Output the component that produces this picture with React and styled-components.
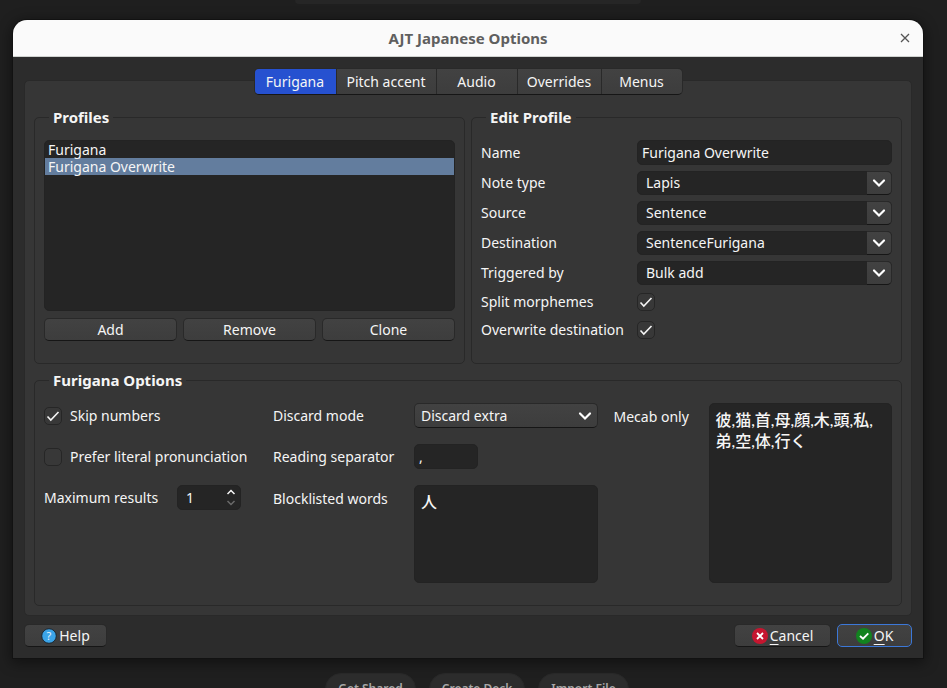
import React, { useState } from "react";
import styled, { createGlobalStyle, css } from "styled-components";

const GlobalStyle = createGlobalStyle`
  *, *::before, *::after { box-sizing: border-box; }
  body {
    margin: 0;
    background: #1f1f1f;
    color: #f5f5f5;
    font: 14px/18px "Noto Sans", "Noto Sans CJK JP", sans-serif;
  }
  button, input, select, textarea { font: inherit; color: inherit; margin: 0; }
`;

const raised = css`
  background: linear-gradient(#424242, #3d3d3d);
  border: 1px solid #292929;
  border-bottom-color: #161616;
  border-radius: 5px;
`;

const sunken = css`
  background: #252525;
  border: 1px solid #232323;
  border-radius: 5px;
`;

const Screen = styled.div`
  display: flex;
  flex-direction: column;
  height: 100vh;
  padding: 0 24px 0 13px;
  overflow: hidden;
`;

const DeckPanel = styled.div`
  flex: none;
  align-self: center;
  width: 38%;
  height: 4px;
  background: #262626;
  border-radius: 0 0 10px 10px;
`;

const DeckActions = styled.div`
  display: flex;
  flex: none;
  justify-content: center;
  gap: 13px;
  margin-top: 15px;
  padding-left: 18px;
`;

const DeckButton = styled.button`
  height: 32px;
  padding: 0 12px;
  background: #2c2c2c;
  border: 1px solid #282828;
  border-radius: 16px;
  color: #a8a8a8;
  font-size: 12px;
  font-weight: 600;
`;

const Dialog = styled.section`
  flex: none;
  margin-top: 16px;
  background: #2c2c2c;
  border-radius: 14px 14px 0 0;
  box-shadow: 0 0 0 1px #121212, 0 3px 14px 2px rgba(0, 0, 0, 0.45);
`;

const TitleBar = styled.header`
  display: grid;
  grid-template-columns: 36px 1fr 36px;
  align-items: center;
  height: 37px;
  background: #fafafa;
  border-bottom: 1px solid #cfd2cf;
  border-radius: 14px 14px 0 0;
`;

const Title = styled.h1`
  grid-column: 2;
  margin: 0;
  color: #5f5f5f;
  font-size: 15px;
  font-weight: 700;
  text-align: center;
`;

const CloseButton = styled.button`
  display: grid;
  place-items: center;
  height: 36px;
  padding: 0;
  background: none;
  border: 0;
  color: #555;
`;

const DialogBody = styled.div`
  padding: 11px;
`;

const TabBar = styled.div`
  position: relative;
  display: flex;
  width: max-content;
  margin: 0 auto;
  overflow: hidden;
  ${raised}
`;

const Tab = styled.button`
  min-width: ${(p) => p.$width}px;
  height: 25px;
  padding: 0;
  background: ${(p) => (p.$active ? "#2651d0" : "transparent")};
  border: 0;
  border-left: ${(p) => (p.$first ? "0" : "1px solid #292929")};
`;

const TabPane = styled.div`
  display: grid;
  grid-template-columns: 1fr 1fr;
  gap: 7px 6px;
  margin-top: -15px;
  padding: 27px 9px 9px;
  background: #363636;
  border: 1px solid #292929;
  border-radius: 5px;
`;

const Group = styled.fieldset`
  min-width: 0;
  margin: 0;
  padding: 14px 9px 22px;
  border: 1px solid #292929;
  border-radius: 5px;
  grid-column: ${(p) => (p.$wide ? "1 / -1" : "auto")};
`;

const GroupTitle = styled.legend`
  margin-left: 5px;
  padding: 0 4px;
  font-size: 15px;
  line-height: 18px;
  font-weight: 700;
`;

const ProfileList = styled.ul`
  height: 171px;
  margin: 0 0 7px;
  padding: 0;
  list-style: none;
  overflow: auto;
  ${sunken}
`;

const ProfileItem = styled.li`
  height: 17px;
  padding: 0 3px;
  line-height: 17px;
  background: ${(p) => (p.$selected ? "#637d9e" : "transparent")};
`;

const ButtonRow = styled.div`
  display: grid;
  grid-template-columns: repeat(3, 1fr);
  gap: 6px;
`;

const PushButton = styled.button`
  display: flex;
  align-items: center;
  justify-content: center;
  gap: 2px;
  height: 23px;
  min-width: ${(p) => p.$width || 0}px;
  padding: 0 16px;
  ${raised}
  ${(p) => p.$default && css`border-color: #3c78d8;`}
`;

const EditGrid = styled.div`
  display: grid;
  grid-template-columns: 150px 1fr;
  gap: 6px;
  align-items: center;
`;

const OptionsGrid = styled.div`
  display: grid;
  grid-template-columns: 213px 125px 1fr 79px 1fr;
  grid-template-rows: 25px 25px 98px;
  gap: 16px;
`;

const Label = styled.label`
  white-space: nowrap;
  line-height: 22px;
`;

const OptionLabel = styled(Label)`
  line-height: ${(p) => (p.$tall ? 28 : 25)}px;
`;

const TextInput = styled.input`
  width: ${(p) => (p.$short ? "64px" : "100%")};
  height: 25px;
  padding: 0 4px;
  outline: 0;
  ${sunken}
`;

const TextBox = styled.textarea`
  display: block;
  width: 100%;
  height: 100%;
  padding: 5px 6px;
  font: 500 16px/21px Lato, "Noto Sans CJK JP", sans-serif;
  resize: none;
  outline: 0;
  grid-row: ${(p) => (p.$tall ? "1 / -1" : "auto")};
  grid-column: ${(p) => (p.$tall ? 5 : "auto")};
  ${sunken}
`;

const SelectFrame = styled.span`
  display: grid;
  grid-template-columns: 1fr 25px;
  height: ${(p) => (p.$raised ? 25 : 24)}px;
`;

const SelectControl = styled.select`
  grid-area: 1 / 1 / 2 / 3;
  padding: 0 30px 0 ${(p) => (p.$raised ? 6 : 8)}px;
  appearance: none;
  outline: 0;
  ${(p) => (p.$raised ? raised : sunken)}
`;

const SelectArrow = styled.span`
  grid-area: 1 / 2;
  display: grid;
  place-items: center;
  pointer-events: none;
  ${(p) =>
    !p.$raised &&
    css`
      ${raised}
      border-left: 0;
      border-radius: 0 5px 5px 0;
    `}
`;

const CheckFrame = styled.span`
  display: grid;
  width: 18px;
  height: 18px;
  place-items: center;
  svg { grid-area: 1 / 1; pointer-events: none; }
`;

const CheckControl = styled.input`
  grid-area: 1 / 1;
  width: 18px;
  height: 18px;
  appearance: none;
  background: #383838;
  border: 1px solid #262626;
  border-radius: 5px;
  & + svg { visibility: hidden; }
  &:checked + svg { visibility: visible; }
`;

const CheckRow = styled.div`
  display: flex;
  align-items: center;
  gap: 8px;
`;

const SpinRow = styled.div`
  display: grid;
  grid-template-columns: 117px 64px;
  gap: 16px;
  align-items: start;
`;

const SpinFrame = styled.span`
  display: grid;
  grid-template-columns: 1fr 18px;
  height: 25px;
  ${sunken}
`;

const SpinInput = styled.input`
  width: 100%;
  padding: 0 0 0 8px;
  background: none;
  border: 0;
  outline: 0;
  appearance: textfield;
  &::-webkit-inner-spin-button { appearance: none; }
`;

const SpinButtons = styled.span`
  display: grid;
  grid-template-rows: 1fr 1fr;
`;

const SpinButton = styled.button`
  display: grid;
  place-items: center;
  padding: 0;
  background: none;
  border: 0;
  color: ${(p) => (p.disabled ? "#6a6a6a" : "#f5f5f5")};
`;

const Footer = styled.footer`
  display: flex;
  gap: 6px;
  margin-top: 8px;
`;

const Spacer = styled.span`
  flex: 1;
`;

const Mnemonic = styled.span`
  text-decoration: underline;
  text-underline-offset: 3px;
`;

const Chevron = () => (
  <svg width="14" height="10" viewBox="0 0 14 10" fill="none" stroke="#fff" strokeWidth="2.2" strokeLinecap="round">
    <path d="M2 2.5 7 7.5 12 2.5" />
  </svg>
);

const Tick = () => (
  <svg width="14" height="12" viewBox="0 0 14 12" fill="none" stroke="#f5f5f5" strokeWidth="1.6">
    <path d="M1.5 6.5 4.8 10 12.5 2" />
  </svg>
);

const SpinArrow = ({ down }) => (
  <svg width="10" height="6" viewBox="0 0 10 6" fill="none" stroke="currentColor" strokeWidth="1.5">
    <path d={down ? "M1.5 1 5 4.5 8.5 1" : "M1.5 5 5 1.5 8.5 5"} />
  </svg>
);

const HelpIcon = () => (
  <svg width="16" height="16" viewBox="0 0 16 16">
    <circle cx="8" cy="8" r="7.3" fill="#3ba4e8" stroke="#1b2630" />
    <text x="8" y="12" textAnchor="middle" fontFamily="Noto Sans, sans-serif" fontSize="11" fill="#e4f3fd">?</text>
  </svg>
);

const CancelIcon = () => (
  <svg width="16" height="16" viewBox="0 0 16 16">
    <circle cx="8" cy="8" r="8" fill="#c6152f" />
    <path d="M5 5 11 11M11 5 5 11" stroke="#fff" strokeWidth="1.8" />
  </svg>
);

const OkIcon = () => (
  <svg width="16" height="16" viewBox="0 0 16 16">
    <circle cx="8" cy="8" r="8" fill="#12831f" />
    <path d="M4 8 7 10.7 12.3 5.3" fill="none" stroke="#fff" strokeWidth="1.8" />
  </svg>
);

const TABS = [
  { name: "Furigana", width: 81 },
  { name: "Pitch accent", width: 100 },
  { name: "Audio", width: 81 },
  { name: "Overrides", width: 84 },
  { name: "Menus", width: 81 },
];

const FIELDS = [
  { id: "note-type", label: "Note type", value: "Lapis" },
  { id: "source", label: "Source", value: "Sentence" },
  { id: "destination", label: "Destination", value: "SentenceFurigana" },
  { id: "trigger", label: "Triggered by", value: "Bulk add" },
];

function Select({ id, value, raised: isRaised }) {
  return (
    <SelectFrame $raised={isRaised}>
      <SelectControl id={id} $raised={isRaised} defaultValue={value}>
        <option>{value}</option>
      </SelectControl>
      <SelectArrow $raised={isRaised}>
        <Chevron />
      </SelectArrow>
    </SelectFrame>
  );
}

function Check({ id, checked }) {
  return (
    <CheckFrame>
      <CheckControl type="checkbox" id={id} defaultChecked={checked} />
      <Tick />
    </CheckFrame>
  );
}

export default function App() {
  const [tab, setTab] = useState("Furigana");
  const [profile, setProfile] = useState("Furigana Overwrite");
  const [max, setMax] = useState(1);

  return (
    <Screen>
      <GlobalStyle />
      <DeckPanel />
      <Dialog role="dialog" aria-labelledby="dialog-title">
        <TitleBar>
          <Title id="dialog-title">AJT Japanese Options</Title>
          <CloseButton aria-label="Close">
            <svg width="10" height="10" viewBox="0 0 10 10" stroke="currentColor" strokeWidth="1.3">
              <path d="M1 1 9 9M9 1 1 9" />
            </svg>
          </CloseButton>
        </TitleBar>
        <DialogBody>
          <TabBar role="tablist">
            {TABS.map(({ name, width }, i) => (
              <Tab
                key={name}
                role="tab"
                aria-selected={tab === name}
                $active={tab === name}
                $first={i === 0}
                $width={width}
                onClick={() => setTab(name)}
              >
                {name}
              </Tab>
            ))}
          </TabBar>
          <TabPane>
            <Group>
              <GroupTitle>Profiles</GroupTitle>
              <ProfileList role="listbox" aria-label="Profiles">
                {["Furigana", "Furigana Overwrite"].map((name) => (
                  <ProfileItem
                    key={name}
                    role="option"
                    aria-selected={profile === name}
                    $selected={profile === name}
                    onClick={() => setProfile(name)}
                  >
                    {name}
                  </ProfileItem>
                ))}
              </ProfileList>
              <ButtonRow>
                <PushButton>Add</PushButton>
                <PushButton>Remove</PushButton>
                <PushButton>Clone</PushButton>
              </ButtonRow>
            </Group>

            <Group>
              <GroupTitle>Edit Profile</GroupTitle>
              <EditGrid>
                <Label htmlFor="name">Name</Label>
                <TextInput id="name" defaultValue="Furigana Overwrite" />
                {FIELDS.map(({ id, label, value }) => (
                  <React.Fragment key={id}>
                    <Label htmlFor={id}>{label}</Label>
                    <Select id={id} value={value} />
                  </React.Fragment>
                ))}
                <Label htmlFor="split">Split morphemes</Label>
                <Check id="split" checked />
                <Label htmlFor="overwrite">Overwrite destination</Label>
                <Check id="overwrite" checked />
              </EditGrid>
            </Group>

            <Group $wide>
              <GroupTitle>Furigana Options</GroupTitle>
              <OptionsGrid>
                <CheckRow>
                  <Check id="skip" checked />
                  <OptionLabel htmlFor="skip">Skip numbers</OptionLabel>
                </CheckRow>
                <OptionLabel htmlFor="discard">Discard mode</OptionLabel>
                <Select id="discard" value="Discard extra" raised />
                <OptionLabel htmlFor="mecab" $tall>Mecab only</OptionLabel>
                <TextBox id="mecab" $tall defaultValue="彼,猫,首,母,顔,木,頭,私,弟,空,体,行く" spellCheck={false} />

                <CheckRow>
                  <Check id="literal" />
                  <OptionLabel htmlFor="literal">Prefer literal pronunciation</OptionLabel>
                </CheckRow>
                <OptionLabel htmlFor="separator">Reading separator</OptionLabel>
                <TextInput id="separator" $short defaultValue="," />
                <span />

                <SpinRow>
                  <OptionLabel htmlFor="max">Maximum results</OptionLabel>
                  <SpinFrame>
                    <SpinInput
                      id="max"
                      type="number"
                      min="1"
                      value={max}
                      onChange={(e) => setMax(Number(e.target.value))}
                    />
                    <SpinButtons>
                      <SpinButton aria-label="Increase" onClick={() => setMax(max + 1)}>
                        <SpinArrow />
                      </SpinButton>
                      <SpinButton aria-label="Decrease" disabled={max <= 1} onClick={() => setMax(max - 1)}>
                        <SpinArrow down />
                      </SpinButton>
                    </SpinButtons>
                  </SpinFrame>
                </SpinRow>
                <OptionLabel htmlFor="blocklist" $tall>Blocklisted words</OptionLabel>
                <TextBox id="blocklist" defaultValue="人" spellCheck={false} />
              </OptionsGrid>
            </Group>
          </TabPane>
          <Footer>
            <PushButton $width={83}>
              <HelpIcon />
              Help
            </PushButton>
            <Spacer />
            <PushButton $width={97}>
              <CancelIcon />
              <span><Mnemonic>C</Mnemonic>ancel</span>
            </PushButton>
            <PushButton $width={75} $default>
              <OkIcon />
              <span><Mnemonic>O</Mnemonic>K</span>
            </PushButton>
          </Footer>
        </DialogBody>
      </Dialog>
      <DeckActions>
        <DeckButton>Get Shared</DeckButton>
        <DeckButton>Create Deck</DeckButton>
        <DeckButton>Import File</DeckButton>
      </DeckActions>
    </Screen>
  );
}
